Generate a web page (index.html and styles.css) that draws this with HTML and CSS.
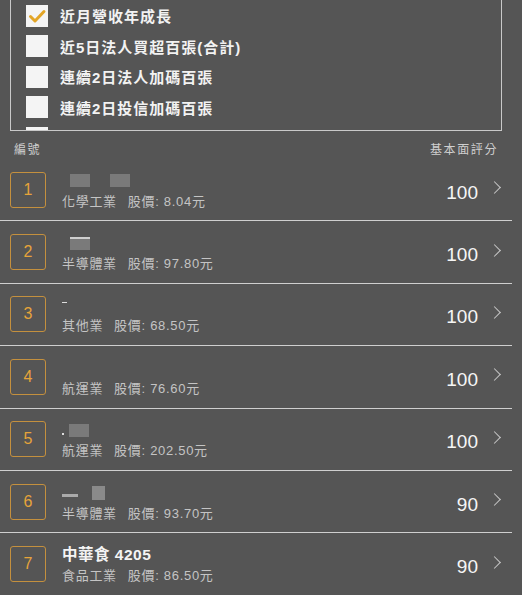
FILE: index.html
```html
<!DOCTYPE html>
<html lang="zh-Hant">
<head>
<meta charset="utf-8">
<link rel="stylesheet" href="styles.css">
</head>
<body>
<div class="filter">
  <ul class="opts">
    <li class="opt"><span class="cb checked"><svg viewBox="0 0 22 22" width="22" height="22"><path d="M4.5 11.5 L9 16 L18 6.5" fill="none" stroke="#e3a526" stroke-width="3" stroke-linecap="round" stroke-linejoin="round"/></svg></span><span class="lbl">近月營收年成長</span></li>
    <li class="opt"><span class="cb"></span><span class="lbl">近5日法人買超百張(合計)</span></li>
    <li class="opt"><span class="cb"></span><span class="lbl">連續2日法人加碼百張</span></li>
    <li class="opt"><span class="cb"></span><span class="lbl">連續2日投信加碼百張</span></li>
    <li class="opt"><span class="cb"></span></li>
  </ul>
</div>
<div class="head">
  <span>編號</span>
  <span>基本面評分</span>
</div>
<ul class="list">
  <li class="row">
    <span class="num">1</span>
    <div class="info">
      <div class="title"><span class="blur b1"></span><span class="blur b2"></span></div>
      <div class="sub"><span>化學工業</span><span>股價: 8.04元</span></div>
    </div>
    <span class="score">100</span><span class="chev"></span>
  </li>
  <li class="row">
    <span class="num">2</span>
    <div class="info">
      <div class="title"><span class="blur b3"></span></div>
      <div class="sub"><span>半導體業</span><span>股價: 97.80元</span></div>
    </div>
    <span class="score">100</span><span class="chev"></span>
  </li>
  <li class="row">
    <span class="num">3</span>
    <div class="info">
      <div class="title"><span class="dash"></span></div>
      <div class="sub"><span>其他業</span><span>股價: 68.50元</span></div>
    </div>
    <span class="score">100</span><span class="chev"></span>
  </li>
  <li class="row">
    <span class="num">4</span>
    <div class="info">
      <div class="title"></div>
      <div class="sub"><span>航運業</span><span>股價: 76.60元</span></div>
    </div>
    <span class="score">100</span><span class="chev"></span>
  </li>
  <li class="row">
    <span class="num">5</span>
    <div class="info">
      <div class="title"><span class="dot"></span><span class="blur b5"></span></div>
      <div class="sub"><span>航運業</span><span>股價: 202.50元</span></div>
    </div>
    <span class="score">100</span><span class="chev"></span>
  </li>
  <li class="row">
    <span class="num">6</span>
    <div class="info">
      <div class="title"><span class="blur b6a"></span><span class="blur b6"></span></div>
      <div class="sub"><span>半導體業</span><span>股價: 93.70元</span></div>
    </div>
    <span class="score">90</span><span class="chev"></span>
  </li>
  <li class="row">
    <span class="num">7</span>
    <div class="info">
      <div class="title">中華食 4205</div>
      <div class="sub"><span>食品工業</span><span>股價: 86.50元</span></div>
    </div>
    <span class="score">90</span><span class="chev"></span>
  </li>
</ul>
</body>
</html>
```

FILE: styles.css
```css
* { box-sizing: border-box; }
html, body { margin: 0; padding: 0; }
body {
  background: #555555;
  width: 522px;
  height: 595px;
  overflow: hidden;
  font-family: "Liberation Sans", "Noto Sans CJK TC", sans-serif;
  color: #f2f2f2;
}
ul { list-style: none; margin: 0; padding: 0; }

.filter {
  margin: 0 20px 0 10px;
  height: 131px;
  border: 1px solid #c9c9c9;
  border-top: none;
  overflow: hidden;
}
.opts { padding: 0 0 0 15px; }
.opt {
  display: flex;
  align-items: center;
  height: 30.5px;
}
.opt:first-child { margin-top: 0.5px; }
.cb {
  width: 22px;
  height: 22px;
  background: #f4f4f4;
  margin-right: 12px;
  flex: none;
  display: block;
}
.cb svg { display: block; }
.lbl {
  font-size: 15px;
  font-weight: 700;
  letter-spacing: 1px;
  color: #f2f2f2;
}

.head {
  display: flex;
  justify-content: space-between;
  height: 28px;
  padding: 11px 24px 0 14px;
  font-size: 12px;
  line-height: 16px;
  letter-spacing: 1.6px;
  color: #cfcfcf;
}

.list { margin-right: 10px; }
.row {
  display: flex;
  align-items: center;
  height: 62.4px;
  border-bottom: 1px solid #cfcfcf;
  padding: 0 10px 0 10px;
}
.num {
  width: 36px;
  height: 36px;
  flex: none;
  border: 1px solid #c4903e;
  border-radius: 3px;
  display: flex;
  align-items: center;
  justify-content: center;
  color: #e6a43a;
  font-size: 16px;
}
.info {
  flex: 1;
  margin-left: 16px;
  display: flex;
  flex-direction: column;
  padding-top: 2px;
}
.title {
  height: 20px;
  font-size: 15.5px;
  font-weight: 700;
  line-height: 20px;
  letter-spacing: 0.5px;
  color: #f4f4f4;
  display: flex;
  align-items: center;
}
.sub {
  margin-top: 2px;
  font-size: 13px;
  line-height: 18px;
  letter-spacing: 0.7px;
  color: #c4c4c4;
  display: flex;
  gap: 11px;
}
.blur { display: block; background: #7a7a7a; height: 13px; }
.b1 { width: 20px; margin-left: 8px; }
.b2 { width: 20px; margin-left: 20px; }
.b3 { width: 20px; margin-left: 8px; border-top: 2px solid #cfcfcf; }
.b5 { width: 20px; margin-left: 5px; }
.b6a { width: 16px; height: 3px; background: #aaa; margin-top: 6px; }
.b6 { width: 13px; height: 14px; margin-left: 14px; background: #8a8a8a; }
.dash { display: block; width: 5px; height: 1px; background: #ddd; margin-top: -6px; }
.dot { display: block; width: 2px; height: 2px; background: #ddd; margin-top: 8px; }

.score {
  font-size: 19px;
  color: #f6f6f6;
  margin-top: 6px;
}
.chev {
  width: 9px;
  height: 9px;
  border-top: 1.6px solid #c8c8c8;
  border-right: 1.6px solid #c8c8c8;
  transform: rotate(45deg);
  margin-left: 12px;
  margin-right: 3px;
  margin-top: -4px;
}
```
